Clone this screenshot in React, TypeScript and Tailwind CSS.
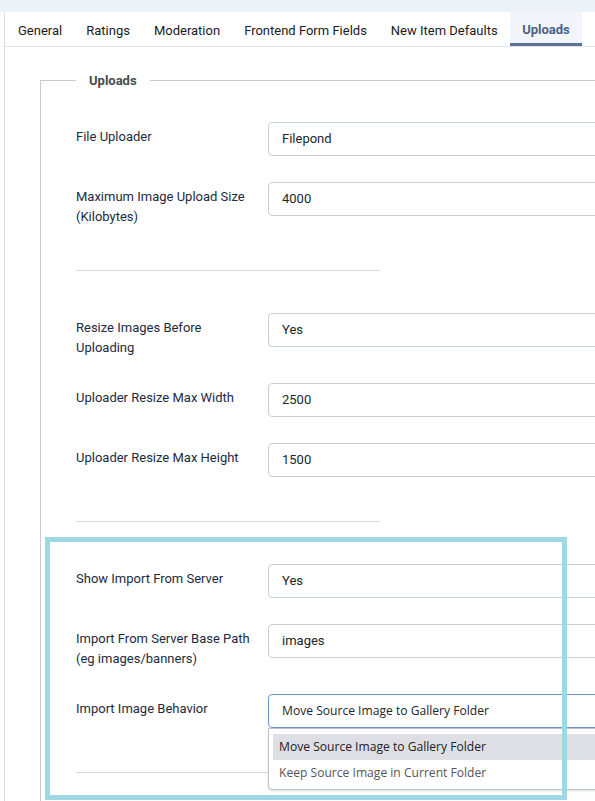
import type { ReactNode } from 'react';

interface FieldProps {
  label: string;
  value: string;
  focused?: boolean;
  children?: ReactNode;
  selectFont?: boolean;
}

function Field({ label, value, focused, children, selectFont }: FieldProps) {
  return (
    <div className="flex items-start mb-[26px]">
      <label className="w-[192px] shrink-0 pt-[5px] pr-[12px] text-[13px] leading-[19.5px] text-[#1c2b41]">
        {label}
      </label>
      <div className="relative">
        <div
          className={
            'w-[360px] h-[34px] rounded-[4px] border bg-white px-[13px] flex items-center text-[#22262a] ' +
            (focused ? 'border-[#6f92cf] ' : 'border-[#c8cdd8] ') +
            (selectFont ? "font-['Open_Sans',sans-serif] text-[12.1px]" : 'text-[13px]')
          }
        >
          {value}
        </div>
        {children}
      </div>
    </div>
  );
}

function Divider() {
  return <div className="w-[304px] h-px bg-[#d3d7de] mt-[18px] mb-[42px]" />;
}

const tabs = ['General', 'Ratings', 'Moderation', 'Frontend Form Fields', 'New Item Defaults', 'Uploads'];

export default function App() {
  return (
    <div className="relative w-[595px] h-[801px] overflow-hidden bg-white font-['Roboto',sans-serif]">
      <div className="h-[12px] bg-[#edf1f8]" />
      <div className="ml-[4px] border-l border-[#dadee5] h-[789px]">
        {/* Tabs */}
        <div className="flex h-[35px] border-b border-[#dfe3ea] pl-[1px]">
          {tabs.map((t) =>
            t === 'Uploads' ? (
              <div
                key={t}
                className="px-[12.5px] h-[34px] flex items-center text-[13px] font-bold text-[#4a6187] bg-[#f2f5fa] border-b-[3px] border-[#5d7394] pt-[4px]"
              >
                {t}
              </div>
            ) : (
              <div key={t} className="px-[12px] h-[34px] pt-[4px] flex items-center text-[13px] text-[#1b1b1b]">
                {t}
              </div>
            )
          )}
        </div>

        {/* Fieldset */}
        <fieldset className="ml-[35px] mt-[23px] w-[640px] border border-[#c5cbd6] pl-[35px] pt-[32px] pb-[60px]">
          <legend className="px-[13px] text-[13px] leading-[20px] font-bold text-[#4a4a4a] translate-y-[1px]">Uploads</legend>
          <div className="flex flex-col">
            <Field label="File Uploader" value="Filepond" />
            <Field label="Maximum Image Upload Size (Kilobytes)" value="4000" />
            <Divider />
            <Field label="Resize Images Before Uploading" value="Yes" />
            <Field label="Uploader Resize Max Width" value="2500" />
            <Field label="Uploader Resize Max Height" value="1500" />
            <Divider />
            <Field label="Show Import From Server" value="Yes" />
            <Field label="Import From Server Base Path (eg images/banners)" value="images" />
            <Field label="Import Image Behavior" value="Move Source Image to Gallery Folder" focused selectFont>
              <div className="absolute left-0 top-full w-[360px] bg-white border border-[#bcc2cc] rounded-b-[4px] px-[4px] pt-[5px] pb-[3px] shadow-sm font-['Open_Sans',sans-serif] text-[12.1px] z-10">
                <div className="h-[26px] px-[6px] flex items-center bg-[#dedfe5] text-[#222]">
                  Move Source Image to Gallery Folder
                </div>
                <div className="h-[26px] px-[6px] flex items-center text-[#555]">
                  Keep Source Image in Current Folder
                </div>
              </div>
            </Field>
            <Divider />
          </div>
        </fieldset>
      </div>

      {/* highlight annotation */}
      <div className="absolute left-[45px] top-[537px] w-[522px] h-[263px] border-[5px] border-[#9fd7e5] pointer-events-none z-20" />
    </div>
  );
}
